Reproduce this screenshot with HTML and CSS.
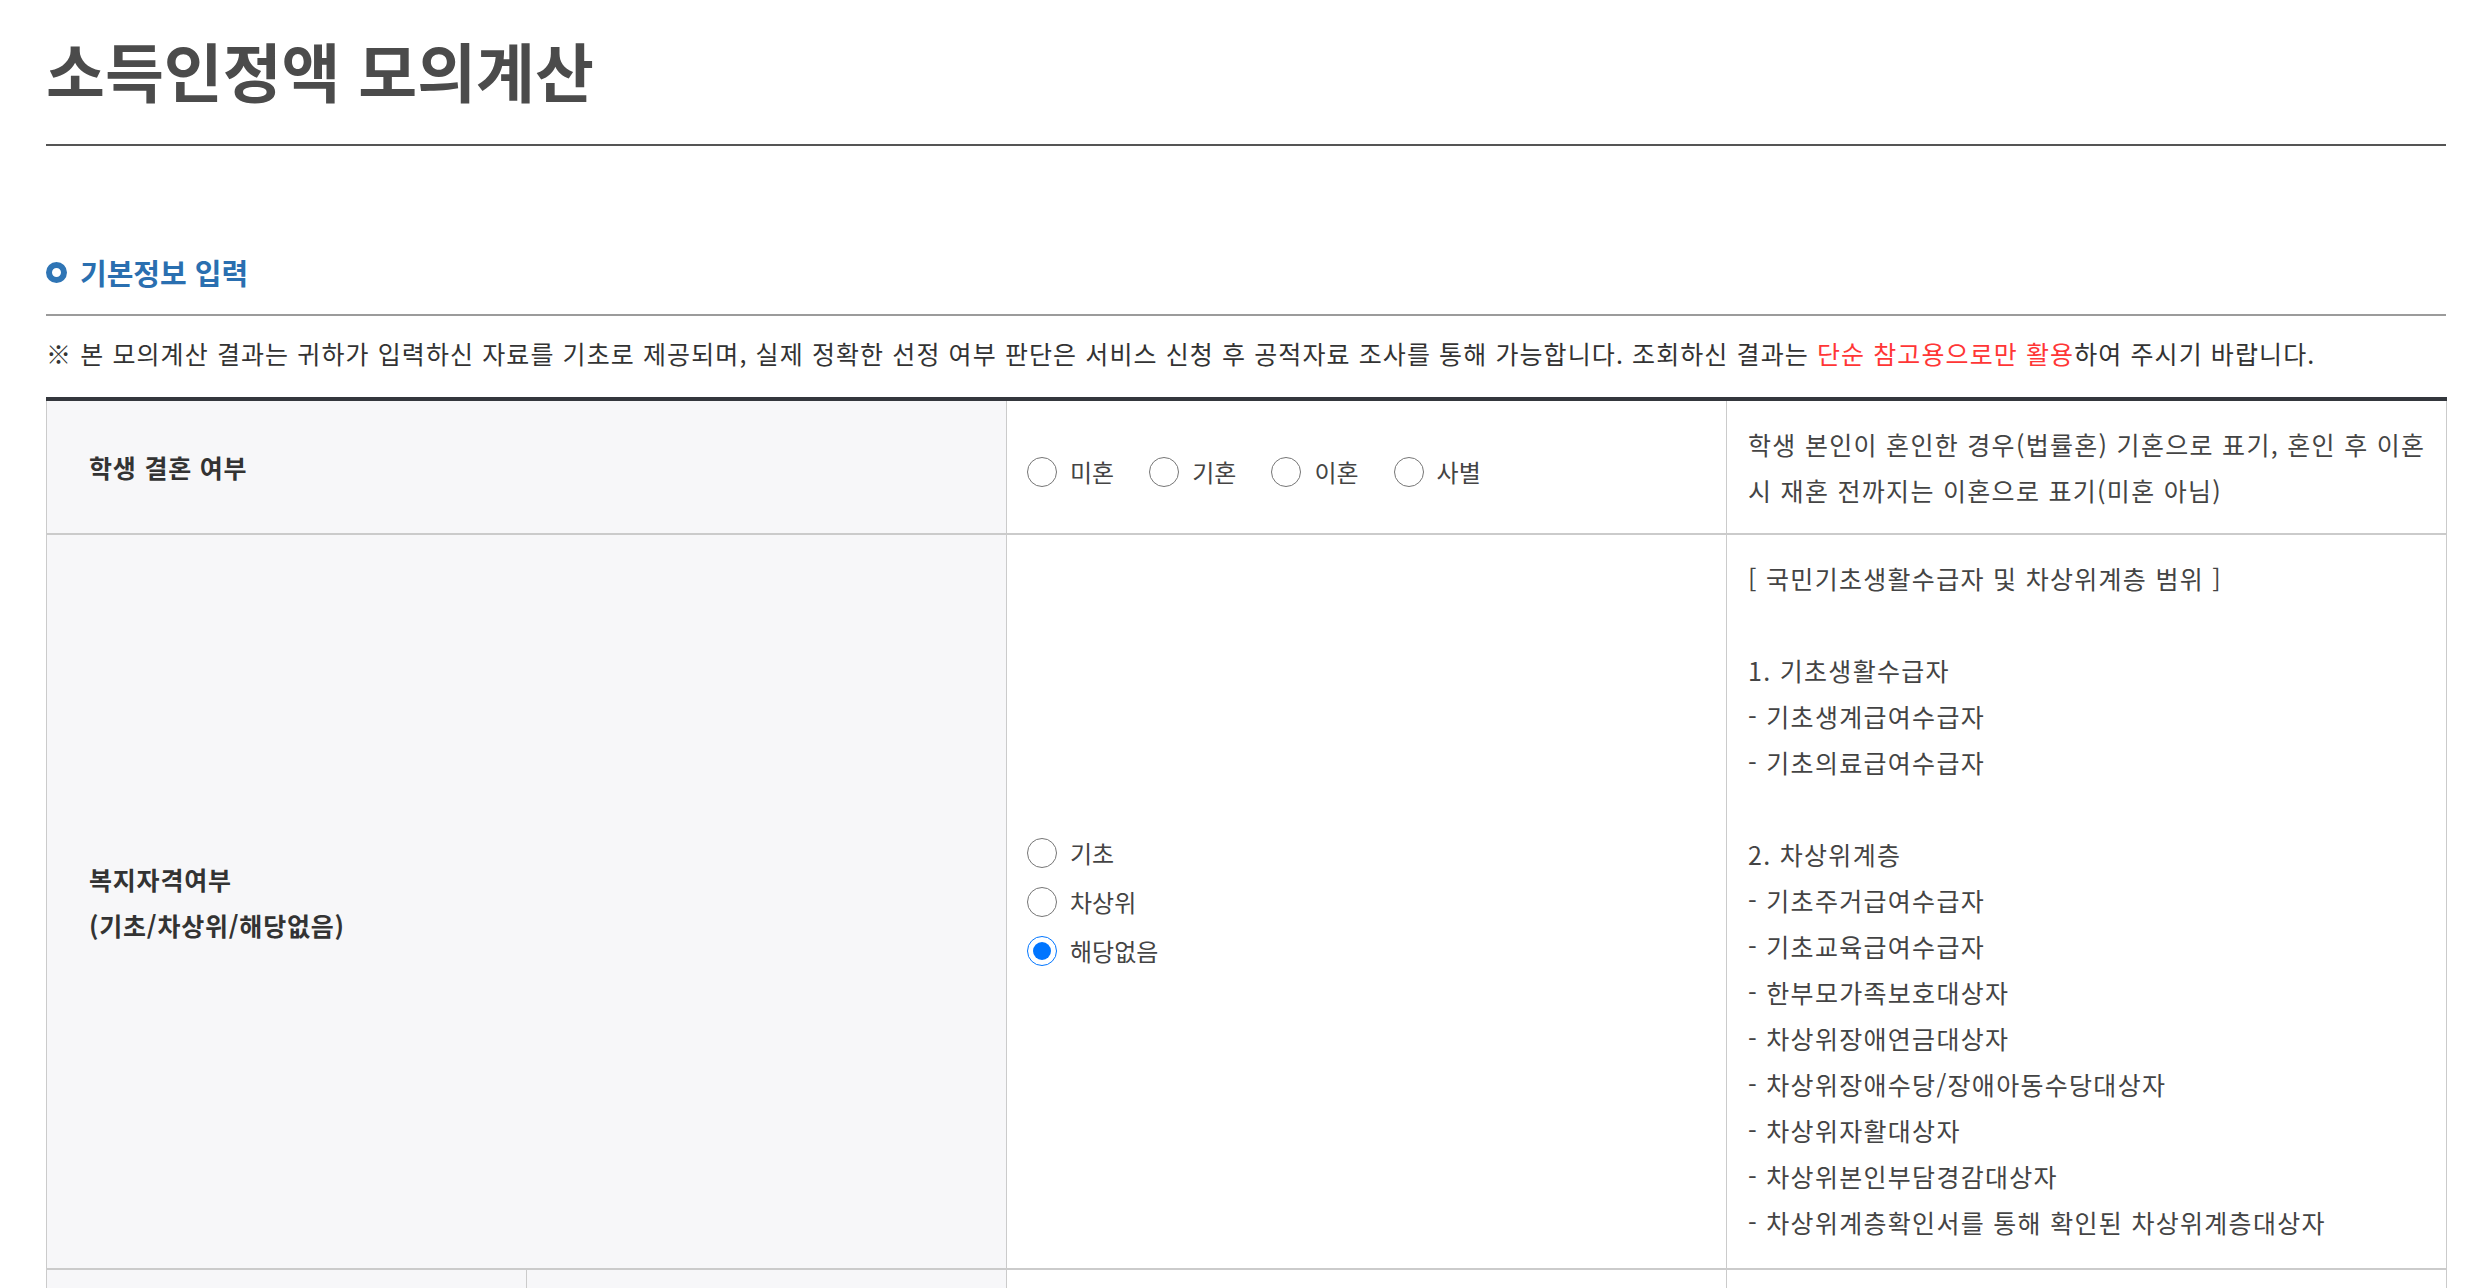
FILE: index.html
```html
<!doctype html>
<html lang="ko">
<head>
<meta charset="utf-8">
<title>소득인정액 모의계산</title>
<link rel="stylesheet" href="styles.css">
</head>
<body>
<div class="wrap">
  <h1 class="page-title">소득인정액 모의계산</h1>

  <h2 class="sec-title"><span class="ring"></span>기본정보 입력</h2>
  <p class="notice">※ 본 모의계산 결과는 귀하가 입력하신 자료를 기초로 제공되며, 실제 정확한 선정 여부 판단은 서비스 신청 후 공적자료 조사를 통해 가능합니다. 조회하신 결과는 <span class="red">단순 참고용으로만 활용</span>하여 주시기 바랍니다.</p>

  <table class="form-table">
    <colgroup>
      <col class="c-half">
      <col class="c-half">
      <col class="c-wide">
      <col class="c-wide">
    </colgroup>
    <tr>
      <th colspan="2">학생 결혼 여부</th>
      <td class="opts inline">
        <label class="opt"><input type="radio" name="marry"> 미혼</label>
        <label class="opt"><input type="radio" name="marry"> 기혼</label>
        <label class="opt"><input type="radio" name="marry"> 이혼</label>
        <label class="opt"><input type="radio" name="marry"> 사별</label>
      </td>
      <td class="desc">학생 본인이 혼인한 경우(법률혼) 기혼으로 표기, 혼인 후 이혼 시 재혼 전까지는 이혼으로 표기(미혼 아님)</td>
    </tr>
    <tr>
      <th colspan="2">복지자격여부<br>(기초/차상위/해당없음)</th>
      <td class="opts stack">
        <label class="opt"><input type="radio" name="welfare"> 기초</label>
        <label class="opt"><input type="radio" name="welfare"> 차상위</label>
        <label class="opt"><input type="radio" name="welfare" checked> 해당없음</label>
      </td>
      <td class="desc list">
        [ 국민기초생활수급자 및 차상위계층 범위 ]<br>
        <br>
        1. 기초생활수급자<br>
        - 기초생계급여수급자<br>
        - 기초의료급여수급자<br>
        <br>
        2. 차상위계층<br>
        - 기초주거급여수급자<br>
        - 기초교육급여수급자<br>
        - 한부모가족보호대상자<br>
        - 차상위장애연금대상자<br>
        - 차상위장애수당/장애아동수당대상자<br>
        - 차상위자활대상자<br>
        - 차상위본인부담경감대상자<br>
        - 차상위계층확인서를 통해 확인된 차상위계층대상자
      </td>
    </tr>
    <tr class="row-next">
      <th></th>
      <th></th>
      <td></td>
      <td></td>
    </tr>
  </table>
</div>
</body>
</html>
```

FILE: styles.css
```css
html, body {
  margin: 0;
  padding: 0;
  background-color: white;
}
body {
  font-family: "Noto Sans CJK KR", "Noto Sans", sans-serif;
  color: #333;
}
.wrap {
  padding: 0 40px 0 46px;
}

.page-title {
  margin: 0;
  padding: 25px 0 31px;
  font-size: 64px;
  line-height: 88px;
  font-weight: bold;
  color: #4b4b4b;
  border-bottom: 2px solid #555;
}

.sec-title {
  display: flex;
  align-items: center;
  gap: 13px;
  margin: 106px 0 0;
  padding-bottom: 22px;
  font-size: 29px;
  line-height: 40px;
  font-weight: bold;
  color: #2a6fb0;
  border-bottom: 2px solid #9b9b9b;
}
.sec-title .ring {
  width: 9px;
  height: 9px;
  border: 6px solid #2f75b5;
  border-radius: 50%;
}

.notice {
  margin: 19px 0 26px;
  font-size: 25px;
  line-height: 36px;
  letter-spacing: 1.1px;
  color: #333;
}
.notice .red {
  color: #ff3636;
}

.form-table {
  width: 2400px;
  table-layout: fixed;
  border-collapse: collapse;
  border-top: 4px solid #34373d;
}
.c-half { width: 480px; }
.c-wide { width: 720px; }

.form-table th,
.form-table td {
  border: 1px solid #cbcbcb;
  border-bottom-width: 2px;
  padding: 20px 21px;
  font-size: 25px;
  line-height: 46px;
  vertical-align: middle;
}
.form-table th {
  padding-left: 42px;
  text-align: left;
  font-weight: bold;
  letter-spacing: 0.8px;
  color: #333;
  background-color: #f7f7f9;
}
.form-table td {
  color: #444;
}
.form-table .desc {
  padding: 20px 12px 20px 21px;
  letter-spacing: 1.3px;
}
.form-table .desc.list {
  padding-bottom: 23px;
}

.opts.inline {
  padding-top: 27px;
  padding-bottom: 13px;
  white-space: nowrap;
}
.opts.inline .opt {
  margin-right: 29px;
}
.opts.stack .opt {
  display: flex;
  align-items: center;
  height: 49px;
}
.opt {
  display: inline-flex;
  align-items: center;
  font-size: 24px;
  color: #444;
}
.opt input {
  width: 30px;
  height: 30px;
  margin: 0 13px 0 -1px;
}

.row-next th,
.row-next td {
  height: 180px;
}
```
